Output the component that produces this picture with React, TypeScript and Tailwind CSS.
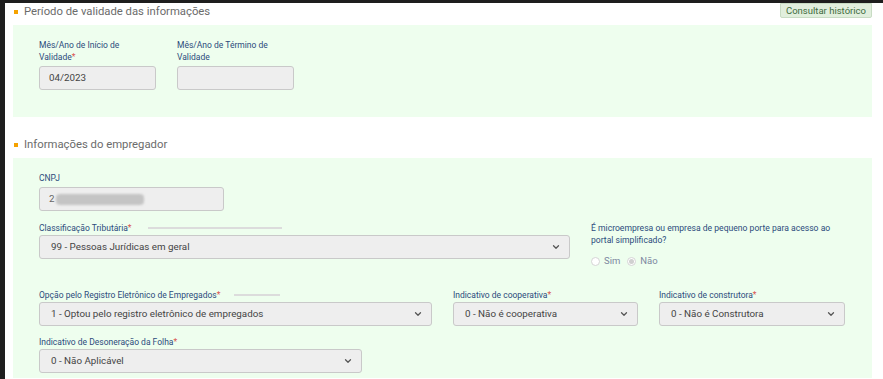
import { ChevronDown } from "lucide-react"

const Label = ({ children, req }: { children: React.ReactNode; req?: boolean }) => (
  <div className="text-[8.5px] leading-[12px] text-[#2c4b7c]">
    {children}
    {req && <span className="text-[#d9534f]">*</span>}
  </div>
)

const Box = ({ value, w, children }: { value?: string; w: string; children?: React.ReactNode }) => (
  <div className={`${w} h-[24px] rounded-[3px] border border-[#c9c9c9] bg-[#eeeeee] flex items-center px-[9px] text-[9.8px] text-[#444]`}>
    {value}
    {children}
  </div>
)

const Select = ({ value, w }: { value: string; w: string }) => (
  <div className={`${w} h-[24px] rounded-[3px] border border-[#c9c9c9] bg-[#eeeeee] flex items-center justify-between pl-[11px] pr-[8px] text-[9.8px] text-[#444]`}>
    <span>{value}</span>
    <ChevronDown className="w-[10px] h-[10px] text-[#555]" strokeWidth={3} />
  </div>
)

const Title = ({ children }: { children: React.ReactNode }) => (
  <div className="flex items-center gap-[6px] pl-[1px] text-[11.3px] leading-[15px] text-[#6b6b6b]">
    <span className="w-[4px] h-[4px] bg-[#f5a200]" />
    {children}
  </div>
)

export default function App() {
  return (
    <div className="w-[883px] h-[379px] overflow-hidden bg-white flex flex-col" style={{ fontFamily: "Roboto, 'Liberation Sans', sans-serif" }}>
      <div className="h-[3px] bg-[#1e1e1e] shrink-0" />
      <div className="flex flex-1">
        <div className="w-[5px] bg-[#1e1e1e] shrink-0" />
        <div className="flex-1 pl-[8px] pr-[11px]">
          <div className="flex items-start justify-between h-[22px]">
            <div className="mt-[1px]">
              <Title>Período de validade das informações</Title>
            </div>
            <button className="h-[15px] w-[92px] text-[9.5px] text-[#3d6b3d] bg-[#e1efdd] border border-[#c8dcc4] rounded-b-[2px]">Consultar histórico</button>
          </div>
          <div className="bg-[#eefeee] h-[92px] pl-[26px] pt-[14px] flex gap-[21px]">
            <div className="flex flex-col gap-[3px]">
              <div className="h-[24px]">
                <Label>Mês/Ano de Início de</Label>
                <Label req>Validade</Label>
              </div>
              <Box w="w-[117px]" value="04/2023" />
            </div>
            <div className="flex flex-col gap-[3px]">
              <div className="h-[24px]">
                <Label>Mês/Ano de Término de</Label>
                <Label>Validade</Label>
              </div>
              <Box w="w-[117px]" />
            </div>
          </div>
          <div className="h-[41px] flex items-end pb-[6px]">
            <Title>Informações do empregador</Title>
          </div>
          <div className="bg-[#eefeee] h-[220px] pl-[26px] pt-[14px]">
            <Label>CNPJ</Label>
            <div className="mt-[3px]">
              <Box w="w-[185px]">
                <span className="text-[#666]">2</span>
                <span className="ml-[1px] w-[88px] h-[11px] bg-[#c4c4c4] blur-[1px] rounded-sm" />
              </Box>
            </div>
            <div className="flex mt-[11px]">
              <div>
                <div className="flex items-center">
                  <Label req>Classificação Tributária</Label>
                  <span className="ml-[16px] w-[134px] h-[2px] bg-[#dcdcdc]" />
                </div>
                <div className="mt-[1px]">
                  <Select w="w-[531px]" value="99 - Pessoas Jurídicas em geral" />
                </div>
              </div>
              <div className="ml-[21px]">
                <div className="text-[8.6px] leading-[12px] text-[#2c4b7c] w-[250px]">É microempresa ou empresa de pequeno porte para acesso ao portal simplificado?</div>
                <div className="flex items-center gap-[4px] mt-[8px] text-[9.5px] text-[#7d88a0]">
                  <span className="w-[9px] h-[9px] rounded-full border border-[#d5d5d5] bg-white" />
                  <span className="mr-[3px]">Sim</span>
                  <span className="w-[9px] h-[9px] rounded-full border border-[#d5d5d5] bg-white flex items-center justify-center">
                    <span className="w-[5px] h-[5px] rounded-full bg-[#d0d0d0]" />
                  </span>
                  <span>Não</span>
                </div>
              </div>
            </div>
            <div className="flex gap-[21px] mt-[21px]">
              <div>
                <div className="flex items-center">
                  <Label req>Opção pelo Registro Eletrônico de Empregados</Label>
                  <span className="ml-[14px] w-[46px] h-[2px] bg-[#dcdcdc]" />
                </div>
                <div className="mt-[1px]">
                  <Select w="w-[393px]" value="1 - Optou pelo registro eletrônico de empregados" />
                </div>
              </div>
              <div>
                <Label req>Indicativo de cooperativa</Label>
                <div className="mt-[1px]">
                  <Select w="w-[185px]" value="0 - Não é cooperativa" />
                </div>
              </div>
              <div>
                <Label req>Indicativo de construtora</Label>
                <div className="mt-[1px]">
                  <Select w="w-[186px]" value="0 - Não é Construtora" />
                </div>
              </div>
            </div>
            <div className="mt-[10px]">
              <Label req>Indicativo de Desoneração da Folha</Label>
              <div className="mt-[1px]">
                <Select w="w-[323px]" value="0 - Não Aplicável" />
              </div>
            </div>
          </div>
        </div>
      </div>
    </div>
  )
}
